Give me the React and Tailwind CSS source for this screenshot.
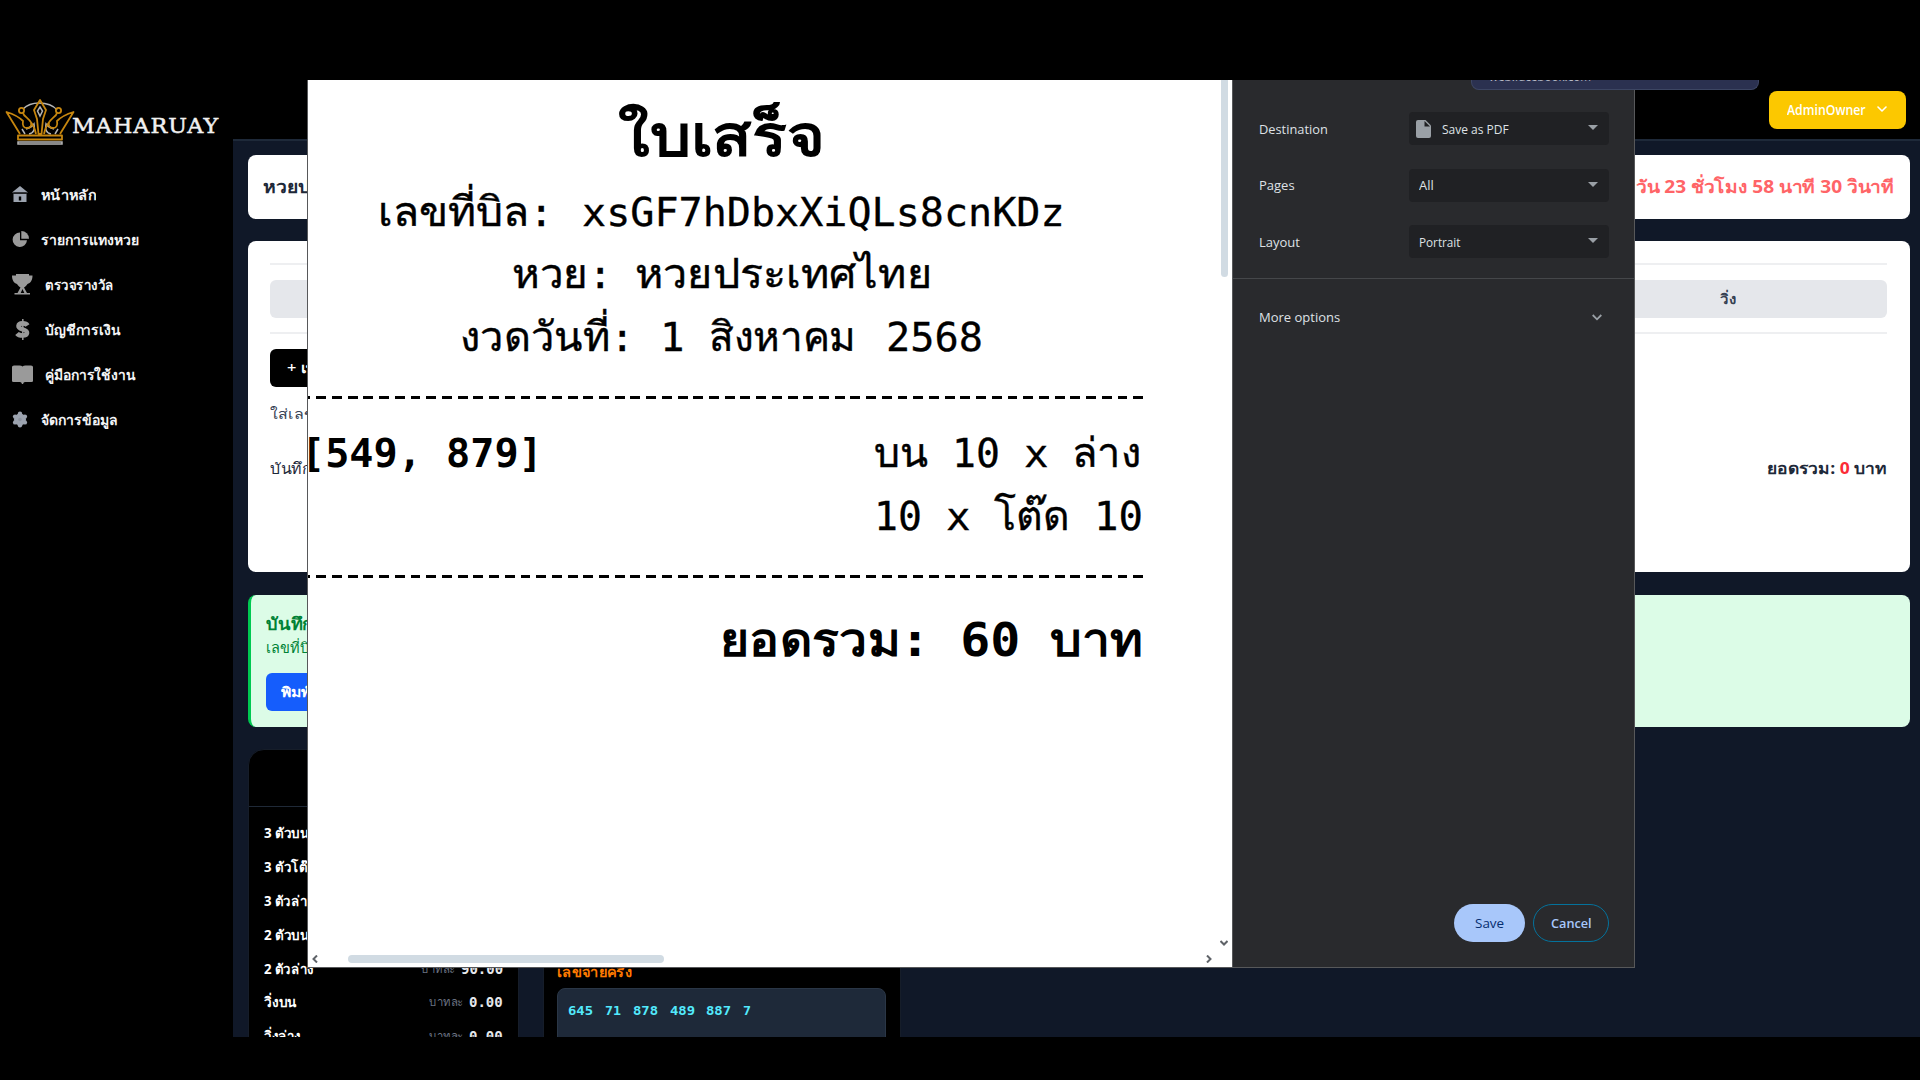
import React, { useLayoutEffect, useRef } from "react";

const UI = "font-['Open_Sans','Noto_Sans',sans-serif]";
const MONO = "font-['DejaVu_Sans_Mono','Noto_Sans',monospace]";

// Single line of text stretched to an exact width.
function Fit({ w, className = "", children }) {
  const ref = useRef(null);
  useLayoutEffect(() => {
    const el = ref.current;
    el.style.transform = `scaleX(${w / el.offsetWidth})`;
  }, [w]);
  return (
    <span className="inline-block shrink-0 text-left align-top" style={{ width: w }}>
      <span ref={ref} className={`inline-block origin-left whitespace-pre align-top ${className}`}>
        {children}
      </span>
    </span>
  );
}

function Crown() {
  return (
    <svg width="70" height="46" viewBox="0 0 70 46" fill="none" className="shrink-0">
      <g stroke="#b4b4b4" strokeWidth="1.5">
        <path d="M18 10C23 5 29 4 34 4s13 1 18 7" />
        <path d="M17 30l3 5M24 35c5-1 6-5 5-10-2 3-5 4-8 5M53 30l-3 5M46 35c-5-1-6-5-5-10 2 3 5 4 8 5" />
        <path d="M13 43h44v2H13z" />
        <path d="M35 8l2.500 4-2.500 5-2.500-5z" />
      </g>
      <g stroke="#c6860f" strokeWidth="1.800" strokeLinejoin="round">
        <path d="M15 35L1.500 13C8 15 13 17 18 22c-1 5 1 7 4 7 3 0 5-2 4-5M55 35L68.500 13C62 15 57 17 52 22c1 5-1 7-4 7-3 0-5-2-4-5" />
        <path d="M18 14c1 5 10 5 13 21M52 14c-1 5-10 5-13 21" />
        <path d="M35 1l-6 10 3 9 1.500 15h3L38 20l3-9z" />
        <circle cx="16.500" cy="11.500" r="2.600" />
        <circle cx="53.500" cy="11.500" r="2.600" />
        <path d="M13 36.500h44v4H13z" />
      </g>
    </svg>
  );
}

const icons = {
  home: (
    <svg width="16" height="17" viewBox="0 0 16 17" fill="#9ca3af">
      <path d="M8 0l8 6.500H0zM1.500 7.500h13V16h-13z" />
      <path d="M6.800 10.500h2.400v4H6.800z" fill="#000" />
      <path d="M1.500 6.600h13v1h-13z" fill="#000" />
    </svg>
  ),
  pie: (
    <svg width="17" height="17" viewBox="0 0 17 17" fill="#9a9a9a">
      <path d="M8 1.500V9.300h7A7.200 7.200 0 1 1 8 1.500z" />
      <path d="M9.300 0A7.800 7.800 0 0 1 17 7.800H9.300z" />
    </svg>
  ),
  trophy: (
    <svg width="21" height="21" viewBox="0 0 21 21" fill="#9a9a9a">
      <path d="M4 0h13v1.500h3.500c0 5-2 7.500-5 8.500-1.200 2-2.500 3-3.500 3.500l3 5.500h3v1.500H2.500V19h3l3-5.500C7.500 13 6.200 12 5 10 2 9 0 6.500 0 1.500h4z" />
      <path d="M10.500 15l1.800 4H8.700z" fill="#000" />
    </svg>
  ),
  dollar: (
    <svg width="21" height="21" viewBox="0 0 21 21" fill="none" stroke="#9a9a9a">
      <path d="M15.500 6.500C14 4 7 3.200 6.500 7c-.4 3.800 9 3 8.500 7-.5 3.500-8 3-10 .5" strokeWidth="4.600" />
      <path d="M10.800 0v21" strokeWidth="1.500" />
    </svg>
  ),
  book: (
    <svg width="21" height="20" viewBox="0 0 21 20" fill="#9a9a9a">
      <path d="M0 2Q0 .5 2 .5h5.500q2 0 3 1 1-1 3-1H19q2 0 2 1.500v14q0 1-1.500 1H13q-1.500 0-2 2h-1q-.5-2-2-2H1.500Q0 17 0 16z" />
    </svg>
  ),
  gear: (
    <svg width="16" height="17" viewBox="0 0 16 17" fill="#9ca3af">
      <circle cx="8" cy="8.500" r="6" />
      <g>
        <circle cx="8" cy="2.800" r="2.200" />
        <circle cx="8" cy="14.200" r="2.200" />
        <circle cx="3.100" cy="5.600" r="2.200" />
        <circle cx="12.900" cy="5.600" r="2.200" />
        <circle cx="3.100" cy="11.400" r="2.200" />
        <circle cx="12.900" cy="11.400" r="2.200" />
      </g>
      <circle cx="8" cy="8.500" r="1.800" fill="#8b929e" />
    </svg>
  ),
};

const menu = [
  { icon: "home", label: "หน้าหลัก", w: 55, wide: false },
  { icon: "pie", label: "รายการแทงหวย", w: 98, wide: false },
  { icon: "trophy", label: "ตรวจรางวัล", w: 69, wide: true },
  { icon: "dollar", label: "บัญชีการเงิน", w: 76, wide: true },
  { icon: "book", label: "คู่มือการใช้งาน", w: 91, wide: true },
  { icon: "gear", label: "จัดการข้อมูล", w: 77, wide: false },
];

function Sidebar() {
  return (
    <aside className="flex w-[233px] shrink-0 flex-col bg-black">
      <div className="flex h-[92px] items-start pl-[5px] pt-[19px]">
        <Crown />
        <div className="ml-[-3px] pt-[13px]">
          <Fit w={147} className="font-['DejaVu_Serif',serif] text-[21px] leading-7 tracking-[1px] text-[#f1f1f1] [-webkit-text-stroke:0.5px_#f1f1f1]">MAHARUAY</Fit>
        </div>
      </div>
      <nav className="flex flex-col">
        {menu.map((m) => (
          <div key={m.icon} className="flex h-[45px] items-center pl-3">
            <span className={m.wide ? "flex w-[33px] items-center" : "flex w-[29px] items-center"}>{icons[m.icon]}</span>
            <Fit w={m.w} className="text-[14px] font-semibold leading-6 text-[#f3f4f6]">{m.label}</Fit>
          </div>
        ))}
      </nav>
    </aside>
  );
}

const rates = [
  { label: "3 ตัวบน", w: 46, value: "900.00", vw: 52 },
  { label: "3 ตัวโต๊ด", w: 52, value: "150.00", vw: 52 },
  { label: "3 ตัวล่าง", w: 50, value: "450.00", vw: 52 },
  { label: "2 ตัวบน", w: 46, value: "90.00", vw: 42 },
  { label: "2 ตัวล่าง", w: 50, value: "90.00", vw: 42 },
  { label: "วิ่งบน", w: 33, value: "0.00", vw: 34 },
  { label: "วิ่งล่าง", w: 37, value: "0.00", vw: 34 },
];

function RateCard() {
  return (
    <section className="h-[400px] w-[271px] rounded-t-2xl border border-[#161d29] bg-black">
      <div className="h-[57px] border-b border-[#1f2937]" />
      <div className="flex flex-col px-[15px] pt-[9px]">
        {rates.map((r) => (
          <div key={r.label} className="flex h-[33.900px] items-center justify-between">
            <Fit w={r.w} className="text-[14px] font-bold leading-6 text-white">{r.label}</Fit>
            <span className="flex items-center gap-[6px]">
              <Fit w={34} className="text-[12px] leading-6 text-[#6a7282]">บาทละ</Fit>
              <Fit w={r.vw} className={`${MONO} text-[14px] font-bold leading-6 text-[#e5e7eb]`}>{r.value}</Fit>
            </span>
          </div>
        ))}
      </div>
    </section>
  );
}

const hotNumbers = ["645", "71", "878", "489", "887", "7"];

function HotCard() {
  return (
    <section className="flex h-[400px] w-[358px] flex-col border border-[#161d29] bg-black pl-[13px] pr-[14px]">
      <div className="flex h-[238px] flex-col justify-end pb-[4px]">
        <Fit w={75} className="text-[14px] font-bold leading-6 text-[#ff7a00]">เลขจ่ายครึ่ง</Fit>
      </div>
      <div className="flex h-[120px] gap-3 rounded-lg border border-[#2a3646] bg-[#1e2939] pl-[10px] pt-[10px]">
        {hotNumbers.map((n) => (
          <Fit key={n} w={n.length * 8.2} className={`${MONO} text-[13px] font-bold leading-6 text-[#53eafd]`}>{n}</Fit>
        ))}
      </div>
    </section>
  );
}

function Page() {
  return (
    <div className="flex h-full">
      <Sidebar />
      <div className="flex grow flex-col bg-[#101828]">
        <header className="flex h-[61px] shrink-0 items-start justify-end border-b-2 border-[#1e2939] bg-black pr-[14px] pt-[11px]">
          <button className="flex h-[38px] w-[137px] items-center rounded-lg bg-[#fcc800] pl-[18px]">
            <Fit w={79} className="text-[14px] font-semibold leading-6 text-white">AdminOwner</Fit>
            <svg width="10" height="6" viewBox="0 0 10 6" fill="none" stroke="#fff" strokeWidth="1.600" className="ml-[11px] mt-[-3px]">
              <path d="M1 1l4 4 4-4" strokeLinecap="round" strokeLinejoin="round" />
            </svg>
          </button>
        </header>
        <main className="flex flex-col pl-[15px] pr-[10px] pt-[14px]">
          <section className="flex h-16 items-center justify-between rounded-lg bg-white pb-0.5 pl-[15px] pr-4">
            <Fit w={134} className="text-[18px] font-semibold leading-8 text-[#1e2939]">หวยประเทศไทย</Fit>
            <Fit w={274} className="text-[18px] font-bold leading-8 text-[#ff6467]">0 วัน 23 ชั่วโมง 58 นาที 30 วินาที</Fit>
          </section>

          <section className="mt-[22px] flex h-[331px] flex-col rounded-lg bg-white pl-[22px] pr-[23px] pt-[22px]">
            <div className="grid h-[71px] grid-cols-4 items-center gap-4 border-y-2 border-[#eeeff1]">
              <span className="h-[38px] rounded-md bg-[#e5e7eb]" />
              <span className="h-[38px] rounded-md bg-[#e5e7eb]" />
              <span className="h-[38px] rounded-md bg-[#e5e7eb]" />
              <span className="flex h-[38px] items-center rounded-md bg-[#e5e7eb] pl-[225px] text-[#364153]">
                <Fit w={16} className="text-[14px] font-semibold leading-6">วิ่ง</Fit>
              </span>
            </div>
            <button className="mt-[15px] flex h-[38px] w-[120px] items-center rounded-md bg-black pl-[17px] text-white">
              <Fit w={97} className="text-[14px] font-semibold leading-6">+ เพิ่มรายการ</Fit>
            </button>
            <div className="mt-[15px] flex h-6">
              <Fit w={74} className="text-[14px] leading-6 text-[#364153]">ใส่เลขหวย</Fit>
            </div>
            <div className="mt-[28px] flex h-7 items-center justify-between text-[#1e2939]">
              <Fit w={70} className="text-[15px] leading-7">บันทึกโพย</Fit>
              <Fit w={120} className="text-[16px] font-bold leading-7">
                ยอดรวม: <span className="text-[#fb2c36]">0</span> บาท
              </Fit>
            </div>
          </section>

          <section className="mt-[23px] flex h-[132px] flex-col items-start rounded-lg border-l-[3px] border-[#00c951] bg-[#dcfce7] pl-[15px] pt-[15px]">
            <Fit w={128} className="text-[17px] font-bold leading-7 text-[#008236]">บันทึกสำเร็จแล้ว</Fit>
            <Fit w={224} className="text-[14.5px] leading-5 text-[#008236]">เลขที่บิล: xsGF7hDbxXiQLs8cnKDz</Fit>
            <button className="mt-[11px] flex h-[38px] w-[110px] items-center rounded-md bg-[#155dfc] pl-[15px] text-white">
              <Fit w={82} className="text-[14px] font-semibold leading-6">พิมพ์ใบเสร็จ</Fit>
            </button>
          </section>

          <div className="mt-[22px] flex items-start gap-6">
            <RateCard />
            <HotCard />
          </div>
        </main>
      </div>
    </div>
  );
}

function Chevron({ className }) {
  return (
    <svg width="8" height="8" viewBox="0 0 8 8" fill="none" stroke="#5f6368" strokeWidth="2" className={className}>
      <path d="M0.500 2l3.500 3.500L7.500 2" />
    </svg>
  );
}

// Thai glyphs inside a monospace line, a little larger and heavier than the digits.
function Thai({ w, children }) {
  return <Fit w={w} className="text-[41px] leading-[62px] [-webkit-text-stroke:0.4px_#000]">{children}</Fit>;
}

function Mono({ w, children }) {
  return <Fit w={w} className="text-[39px] leading-[63px] [-webkit-text-stroke:0.3px_#000]">{children}</Fit>;
}

function Receipt() {
  return (
    <div className={`${MONO} flex h-full w-[836px] flex-col text-black`}>
      <div className="flex h-[101px] pl-[310px] pt-[16px]">
        <Fit w={207} className="text-[57px] font-bold leading-[80px]">ใบเสร็จ</Fit>
      </div>
      <div className="flex h-[215px] flex-col">
        <div className="flex h-[62px] pl-[70px]">
          <Thai w={151}>เลขที่บิล</Thai>
          <Mono w={24}>:</Mono>
          <span className="w-[29px]" />
          <Mono w={483}>xsGF7hDbxXiQLs8cnKDz</Mono>
        </div>
        <div className="flex h-[63px] pl-[204px]">
          <Thai w={76}>หวย</Thai>
          <Mono w={24}>:</Mono>
          <span className="w-[23px]" />
          <Thai w={297}>หวยประเทศไทย</Thai>
        </div>
        <div className="flex h-[63px] pl-[152px]">
          <Thai w={150}>งวดวันที่</Thai>
          <Mono w={24}>:</Mono>
          <span className="w-[26px]" />
          <Mono w={24}>1</Mono>
          <span className="w-[25px]" />
          <Thai w={147}>สิงหาคม</Thai>
          <span className="w-[30px]" />
          <Mono w={97}>2568</Mono>
        </div>
      </div>
      <Dashes />
      <div className="flex h-[176px] justify-between pt-[23px]">
        <Fit w={242} className="ml-[-7px] text-[39px] font-bold leading-[64px]">[549, 879]</Fit>
        <div className="flex w-[270px] flex-col">
          <div className="flex h-[63px] gap-6">
            <Thai w={54}>บน</Thai>
            <Mono w={48}>10</Mono>
            <Mono w={24}>x</Mono>
            <Thai w={69}>ล่าง</Thai>
          </div>
          <div className="flex h-[63px] gap-6">
            <Mono w={48}>10</Mono>
            <Mono w={24}>x</Mono>
            <Thai w={76}>โต๊ด</Thai>
            <Mono w={49}>10</Mono>
          </div>
        </div>
      </div>
      <Dashes />
      <div className="flex justify-end pr-[2px] pt-[22px]">
        <Fit w={422} className="text-[46px] font-bold leading-[80px]">ยอดรวม: 60 บาท</Fit>
      </div>
    </div>
  );
}

function Dashes() {
  return (
    <div className="h-[3px] w-full shrink-0 bg-[repeating-linear-gradient(90deg,#000_0_2.500px,transparent_2.500px_8.300px,#000_8.300px_15.710px)]" />
  );
}

const options = [
  { label: "Destination", w: 69, value: "Save as PDF", vw: 67, file: true },
  { label: "Pages", w: 36, value: "All", vw: 15 },
  { label: "Layout", w: 41, value: "Portrait", vw: 42 },
];

function PrintDialog() {
  return (
    <div className="absolute left-[307px] top-0 flex h-[888px] w-[1328px] border border-t-0 border-[#57585a]">
      <div className="relative h-full w-[924px] overflow-hidden bg-white">
        <Receipt />
        <div className="absolute left-[913px] top-0 h-[197px] w-[7px] rounded-b bg-[#d1dbe3]" />
        <div className="absolute left-[40px] top-[875px] h-2 w-[316px] rounded bg-[#d1dbe3]" />
        <Chevron className="absolute left-[3px] top-[875px] rotate-90" />
        <Chevron className="absolute left-[897px] top-[875px] -rotate-90" />
        <Chevron className="absolute left-[912px] top-[859px]" />
      </div>
      <div className="flex grow flex-col border-l border-[#57585a] bg-[#292a2d] text-[#dfe1e5]">
        <div className="flex h-[199px] flex-col gap-[23.500px] border-b border-[#45474a] pl-[26px] pr-[25px] pt-8">
          {options.map((o) => (
            <div key={o.label} className="flex h-[33px] shrink-0 items-center justify-between">
              <Fit w={o.w} className="text-[13px] leading-6">{o.label}</Fit>
              <div className="flex h-[33px] w-[200px] items-center rounded bg-[#202124] pl-[10px] pr-[11px]">
                {o.file && (
                  <svg width="15" height="18" viewBox="0 0 15 18" className="ml-[-3px] mr-[11px]" fill="#9aa0a6">
                    <path d="M2 0h7.500L15 5.500V16q0 2-2 2H2q-2 0-2-2V2q0-2 2-2z" />
                    <path d="M8.500 1v5.500H14z" fill="#202124" />
                  </svg>
                )}
                <span className="flex pt-[2px]"><Fit w={o.vw} className="text-[12px] leading-6">{o.value}</Fit></span>
                <svg width="10" height="5" viewBox="0 0 10 5" className="ml-auto mt-[-2px]" fill="#9aa0a6">
                  <path d="M0 0h10L5 5z" />
                </svg>
              </div>
            </div>
          ))}
        </div>
        <div className="flex h-[76px] items-center justify-between pl-[26px] pr-[32px]">
          <Fit w={81} className="text-[13px] leading-6">More options</Fit>
          <svg width="10" height="7" viewBox="0 0 10 7" fill="none" stroke="#9aa0a6" strokeWidth="1.800">
            <path d="M0.700 1L5 5.300 9.300 1" />
          </svg>
        </div>
        <div className="mt-auto flex justify-end gap-2 pb-[25px] pr-[25px]">
          <button className="flex h-[38px] w-[71px] items-center justify-center rounded-full bg-[#a8c7fa] text-[#062e6f]">
            <Fit w={29} className="text-[13px] font-medium leading-6">Save</Fit>
          </button>
          <button className="flex h-[38px] w-[76px] items-center justify-center rounded-full border border-[#04729c] text-[#a8c7fa]">
            <Fit w={41} className="text-[13px] font-semibold leading-6">Cancel</Fit>
          </button>
        </div>
      </div>
    </div>
  );
}

export default function App() {
  return (
    <div className={`${UI} h-[1080px] w-[1920px] overflow-hidden bg-black pt-20`}>
      <div className="relative h-[957px] overflow-hidden">
        <Page />
        <PrintDialog />
        <div className="absolute left-[1471px] top-0 h-[10px] w-[288px] overflow-hidden rounded-b-lg border border-t-0 border-[#3d4663] bg-[#2b3150] pl-[17px]">
          <div className="-mt-[11px]">
            <Fit w={102} className="text-[12px] leading-4 text-[#b7bac6]">web.facebook.com</Fit>
          </div>
        </div>
      </div>
    </div>
  );
}
